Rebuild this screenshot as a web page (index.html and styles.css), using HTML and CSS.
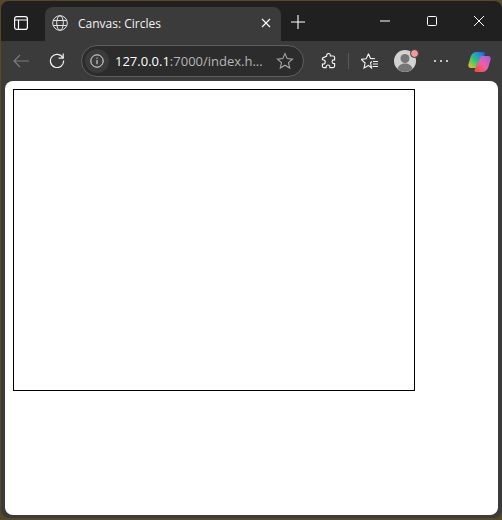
FILE: index.html
```html
<!DOCTYPE html>
<html lang="en">
<head>
  <meta charset="UTF-8" />
  <title>Canvas: Circles</title>
  <link rel="stylesheet" href="styles.css">
</head>
<body>
  <div class="window">
    <div class="titlebar">
      <div class="tab-actions">
        <svg width="16" height="16" viewBox="0 0 16 16" fill="none" stroke="#fff" stroke-width="1.2">
          <rect x="1.6" y="1.6" width="12.8" height="12.8" rx="2.2"/>
          <path d="M1.6 5h12.8M5.5 5v9.4"/>
        </svg>
      </div>
      <div class="tab">
        <svg class="globe" width="16" height="16" viewBox="0 0 16 16" fill="none" stroke="#e4e4e4" stroke-width="1">
          <circle cx="8" cy="8" r="7.3"/>
          <ellipse cx="8" cy="8" rx="3.3" ry="7.3"/>
          <path d="M1.2 5.5h13.6M1.2 10.5h13.6"/>
        </svg>
        <span class="tab-title">Canvas: Circles</span>
        <svg class="tab-close" width="10" height="10" viewBox="0 0 10 10" stroke="#fff" stroke-width="1.1">
          <path d="M1 1l8 8M9 1l-8 8"/>
        </svg>
      </div>
      <svg class="new-tab" width="14" height="14" viewBox="0 0 14 14" stroke="#fff" stroke-width="1.1">
        <path d="M7 0v14M0 7h14"/>
      </svg>
      <div class="window-controls">
        <svg width="10" height="10" viewBox="0 0 10 10" stroke="#fff" stroke-width="1"><path d="M0 5h10"/></svg>
        <svg width="10" height="10" viewBox="0 0 10 10" fill="none" stroke="#fff" stroke-width="1"><rect x="0.5" y="0.5" width="9" height="9" rx="1"/></svg>
        <svg width="10" height="10" viewBox="0 0 10 10" stroke="#fff" stroke-width="1"><path d="M0 0l10 10M10 0l-10 10"/></svg>
      </div>
    </div>

    <div class="toolbar">
      <svg class="back" width="16" height="14" viewBox="0 0 16 14" fill="none" stroke="#7d7d7d" stroke-width="1.1">
        <path d="M16 7H1M7 1L1 7l6 6"/>
      </svg>
      <svg class="reload" width="16" height="16" viewBox="0 0 16 16" fill="none" stroke="#f2f2f2" stroke-width="1.2">
        <path d="M13.9 6A6.6 6.6 0 1 0 14.6 8.5"/>
        <path d="M14.2 1.5v4.7H9.6"/>
      </svg>
      <div class="address">
        <span class="info">
          <svg width="14" height="14" viewBox="0 0 14 14" fill="none" stroke="#e8e8e8" stroke-width="1">
            <circle cx="7" cy="7" r="6.2"/>
            <path d="M7 6v4.2M7 3.6v1.2"/>
          </svg>
        </span>
        <span class="url"><span class="host">127.0.0.1</span>:7000/index.h...</span>
        <svg class="star" width="18" height="18" viewBox="0 0 18 18" fill="none" stroke="#a8a8a8" stroke-width="1.1">
          <path d="M9 1.600l2.200 5 5.300.5-4 3.600 1.200 5.300L9 13.200 4.300 16l1.200-5.300-4-3.600 5.300-.5z"/>
        </svg>
      </div>
      <svg class="puzzle" width="15" height="16" viewBox="0 0 16 17" fill="none" stroke="#f2f2f2" stroke-width="1.2">
        <path d="M6 3.200V2.500a2 2 0 0 1 4 0v.7h3a1.500 1.500 0 0 1 1.500 1.500v2.600h-.7a2 2 0 0 0 0 4h.7v2.700a1.500 1.500 0 0 1-1.500 1.500H9.500v-.7a2 2 0 0 0-4 0v.7H3a1.500 1.500 0 0 1-1.500-1.500v-2.200h.7a2.300 2.300 0 0 0 0-4.600H1.500V5.500z"/>
      </svg>
      <div class="divider"></div>
      <svg class="favorites" width="17" height="16" viewBox="0 0 17 16" fill="none" stroke="#f2f2f2" stroke-width="1.1">
        <path d="M7.500.8l2 4.600 4.500.4M11 8.500l-1.500 1.200 1 5.300-3-2.600-4.500 2.600 1.100-5-3.900-3.600 5-.6L7.500.8"/>
        <path d="M12 8.500h5M12 11h5M11.500 13.500h5.500"/>
      </svg>
      <div class="profile">
        <svg width="22" height="22" viewBox="0 0 22 22">
          <circle cx="11" cy="11" r="11" fill="#d2d2d2"/>
          <circle cx="11" cy="8.500" r="4.500" fill="#767676"/>
          <path d="M3.500 19c1-4 4-5.500 7.500-5.500s6.500 1.500 7.500 5.500a11 11 0 0 1-15 0z" fill="#767676"/>
        </svg>
        <span class="badge"></span>
      </div>
      <div class="more"><span></span><span></span><span></span></div>
      <svg class="copilot" width="23" height="21" viewBox="0 0 23 21">
        <defs>
          <linearGradient id="cop-left" x1="0" y1="1" x2="1" y2="0">
            <stop offset="0" stop-color="#f7c51e"/>
            <stop offset="0.45" stop-color="#2fc27a"/>
            <stop offset="0.8" stop-color="#1a86ea"/>
            <stop offset="1" stop-color="#1458c8"/>
          </linearGradient>
          <linearGradient id="cop-right" x1="0" y1="1" x2="1" y2="0">
            <stop offset="0" stop-color="#f24a24"/>
            <stop offset="0.5" stop-color="#ee5fa8"/>
            <stop offset="1" stop-color="#a05ae8"/>
          </linearGradient>
        </defs>
        <path d="M8 1h7.500c1.500 0 1.800 1.500 1 3L12 15c-.6 1.300-1.500 2-3 2H3c-2 0-3-1.500-2.600-3.500L2 8c.8-4 3-7 6-7z" fill="url(#cop-left)"/>
        <path d="M14 5h6c2 0 3 1.500 2.600 3.500L21 14c-1 4-3 7-6.500 7H8c-1.500 0-2-1.500-1-3l5-10.500C12.500 6 13 5 14 5z" fill="url(#cop-right)"/>
      </svg>
    </div>

    <div class="page">
      <canvas class="board" width="400" height="300"></canvas>
    </div>
  </div>
</body>
</html>
```

FILE: styles.css
```css
html, body {
  margin: 0;
  height: 100%;
  overflow: hidden;
}

body {
  background: #55492a;
  font-family: "Open Sans", "Noto Sans", Arial, sans-serif;
  padding-top: 1px;
  box-sizing: border-box;
}

.window {
  height: 517px;
  margin-left: 1px;
  background: #3b3b3b;
  border-radius: 8px;
  overflow: hidden;
  display: flex;
  flex-direction: column;
}

.titlebar {
  height: 40px;
  flex: none;
  background: #202020;
  display: flex;
  align-items: flex-end;
}

.tab-actions {
  width: 40px;
  height: 33px;
  margin-right: 4px;
  box-sizing: border-box;
  padding-bottom: 3px;
  display: flex;
  align-items: center;
  justify-content: center;
}

.tab {
  width: 236px;
  height: 34px;
  background: #3b3b3b;
  border-radius: 8px 8px 0 0;
  display: flex;
  align-items: center;
  padding: 0 10px 2px 7px;
  box-sizing: border-box;
}

.globe {
  margin-right: 10px;
}

.tab-title {
  flex: 1;
  color: #f2f2f2;
  font-size: 12px;
}

.new-tab {
  margin: 0 0 12px 10px;
}

.window-controls {
  margin-left: auto;
  margin-bottom: 15px;
  padding-right: 18px;
  display: flex;
  gap: 37px;
}

.toolbar {
  height: 40px;
  flex: none;
  display: flex;
  align-items: center;
  padding-left: 12px;
}

.reload {
  margin-left: 20px;
  margin-bottom: 2px;
}

.address {
  width: 223px;
  height: 32px;
  margin-left: 16px;
  box-sizing: border-box;
  background: #2c2c2c;
  border: 1px solid #5f5f5f;
  border-radius: 16px;
  display: flex;
  align-items: center;
  padding: 0 9px 0 3px;
}

.info {
  width: 24px;
  height: 24px;
  border-radius: 50%;
  background: #3b3b3b;
  display: flex;
  align-items: center;
  justify-content: center;
  flex: none;
}

.url {
  margin-left: 6px;
  flex: 1;
  font-size: 13px;
  color: #b5b5b5;
  white-space: nowrap;
}

.host {
  color: #fff;
}

.puzzle {
  margin-left: 17px;
}

.divider {
  width: 1px;
  height: 16px;
  margin-left: 12px;
  background: #5a5a5a;
}

.favorites {
  margin-left: 12px;
}

.profile {
  position: relative;
  width: 22px;
  height: 22px;
  margin-left: 16px;
}

.badge {
  position: absolute;
  top: -1px;
  right: -3px;
  width: 7px;
  height: 7px;
  background: #f29a9a;
  border-radius: 50%;
  border: 1px solid #3b3b3b;
}

.more {
  display: flex;
  gap: 4px;
  margin-left: 18px;
}

.more span {
  width: 2px;
  height: 2px;
  background: #f2f2f2;
  border-radius: 50%;
}

.copilot {
  margin-left: 20px;
}

.page {
  flex: 1;
  margin: 0 4px 3px 4px;
  background: #fff;
  border-radius: 8px;
  padding: 8px;
}

.board {
  display: block;
  border: 1px solid #000;
}
```
